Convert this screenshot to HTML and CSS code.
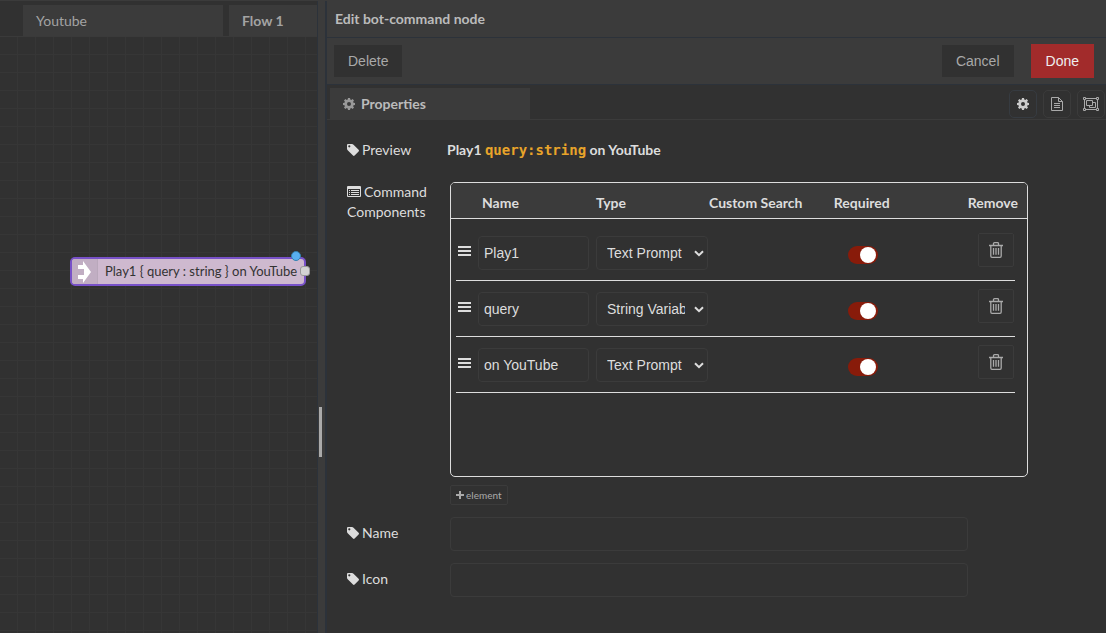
FILE: index.html
```html
<!DOCTYPE html>
<html lang="en">
<head>
<meta charset="utf-8">
<title>Edit bot-command node</title>
<link rel="stylesheet" href="styles.css">
</head>
<body>
<svg class="defs" aria-hidden="true">
  <symbol id="tag" viewBox="0 0 12 12"><path fill-rule="evenodd" d="M0 1Q0 0 1 0H5Q5.800 0 6.500 .7L11.600 5.800Q12.400 6.600 11.600 7.400L7.600 11.500Q6.800 12.300 6 11.500L.7 6.200Q0 5.500 0 4.800ZM2.300 1.200A1.100 1.100 0 1 0 2.300 3.400A1.100 1.100 0 1 0 2.300 1.200Z"/></symbol>
  <symbol id="gear" viewBox="0 0 12 12"><path fill-rule="evenodd" d="M5 0H7L7.300 1.500 8.300 1.900 9.600 1 11 2.400 10.100 3.700 10.500 4.700 12 5V7L10.500 7.300 10.100 8.300 11 9.600 9.600 11 8.300 10.100 7.300 10.500 7 12H5L4.700 10.500 3.700 10.100 2.400 11 1 9.600 1.900 8.300 1.500 7.300 0 7V5L1.500 4.700 1.900 3.700 1 2.400 2.400 1 3.700 1.900 4.700 1.500ZM6 4A2 2 0 1 0 6 8A2 2 0 1 0 6 4Z"/></symbol>
  <symbol id="bars" viewBox="0 0 13 11"><path d="M0 0H13V2H0ZM0 4H13V6H0ZM0 8H13V10H0Z"/></symbol>
  <symbol id="chevron" viewBox="0 0 10 7"><path d="M1 1.200L5 5.200L9 1.200" fill="none" stroke="currentColor" stroke-width="2"/></symbol>
  <symbol id="trash" viewBox="0 0 14 16"><path d="M0 3.500H14M4.500 3V1.500Q4.500 .7 5.500 .7H8.500Q9.500 .7 9.500 1.500V3M1.800 4V14Q1.800 15.300 3 15.300H11Q12.200 15.300 12.200 14V4M4.500 6V12.800M7 6V12.800M9.500 6V12.800" fill="none" stroke="currentColor" stroke-width="1.300"/></symbol>
</svg>
<div class="editor">
  <main class="workspace">
    <nav class="flow-tabs">
      <a class="flow-tab" href="#youtube">Youtube</a>
      <a class="flow-tab flow-tab-active" href="#flow1">Flow 1</a>
    </nav>
    <div class="canvas">
      <div class="node">
        <span class="node-icon"><svg width="13" height="22" viewBox="0 0 13 22"><path d="M0 4H5V0L13 11L5 22V18H0V14H6V8H0Z"/></svg></span>
        <span class="node-label">Play1 { query : string } on YouTube</span>
        <span class="node-changed"></span>
        <span class="node-port"></span>
      </div>
    </div>
  </main>
  <div class="separator"><span class="grip"></span></div>
  <aside class="tray">
    <header class="tray-header">Edit bot-command node</header>
    <div class="toolbar">
      <button class="btn" type="button">Delete</button>
      <span class="toolbar-end">
        <button class="btn" type="button">Cancel</button>
        <button class="btn btn-primary" type="button">Done</button>
      </span>
    </div>
    <div class="tray-tabs">
      <a class="tray-tab" href="#properties"><svg width="12" height="12"><use href="#gear"/></svg>Properties</a>
      <span class="tab-buttons">
        <button class="icon-btn icon-btn-active" type="button" aria-label="Properties"><svg width="12" height="12"><use href="#gear"/></svg></button>
        <button class="icon-btn" type="button" aria-label="Description"><svg width="12" height="14" viewBox="0 0 12 14"><path class="line" d="M.5 .5H7.500L11.500 4.500V13.500H.5ZM7.500 .5V4.500H11.500M3 6.500H9M3 8.500H9M3 10.500H9"/></svg></button>
        <button class="icon-btn" type="button" aria-label="Appearance"><svg width="16" height="14" viewBox="0 0 16 14"><path class="line" d="M2.500 1.500H13.500M2.500 12.500H13.500M1.500 2.500V11.500M14.500 2.500V11.500M.5 .5H2.500V2.500H.5ZM13.500 .5H15.500V2.500H13.500ZM.5 11.500H2.500V13.500H.5ZM13.500 11.500H15.500V13.500H13.500ZM3.500 3.500H9.500V8.500H3.500ZM9.500 5.500H12.500V10.500H6.500V8.500"/></svg></button>
      </span>
    </div>
    <form class="form">
      <div class="row row-preview">
        <span class="label"><svg width="12" height="12"><use href="#tag"/></svg>Preview</span>
        <p class="preview">Play1 <code>query:string</code> on YouTube</p>
      </div>
      <div class="row">
        <span class="label"><svg width="14" height="12" viewBox="0 0 14 12"><path fill-rule="evenodd" d="M1 0H13Q14 0 14 1V10Q14 11 13 11H1Q0 11 0 10V1Q0 0 1 0ZM1 3V10H13V3ZM2 4H3V5H2ZM4 4H12V5H4ZM2 6H3V7H2ZM4 6H12V7H4ZM2 8H3V9H2ZM4 8H12V9H4Z"/></svg>Command Components</span>
        <div class="field">
          <div class="box">
            <table class="components">
              <thead>
                <tr><td></td><th class="name-head">Name</th><th>Type</th><th>Custom Search</th><th>Required</th><th>Remove</th></tr>
              </thead>
              <tbody>
                <tr>
                  <td class="handle"><svg width="13" height="11"><use href="#bars"/></svg></td>
                  <td><input class="text" type="text" value="Play1" aria-label="Name"></td>
                  <td class="pick"><select class="select" aria-label="Type"><option>Text Prompt</option><option>String Variable</option></select><svg class="chevron" width="10" height="7"><use href="#chevron"/></svg></td>
                  <td></td>
                  <td class="required"><input class="toggle" type="checkbox" checked aria-label="Required"></td>
                  <td class="remove"><button class="trash" type="button" aria-label="Remove"><svg width="14" height="16"><use href="#trash"/></svg></button></td>
                </tr>
                <tr>
                  <td class="handle"><svg width="13" height="11"><use href="#bars"/></svg></td>
                  <td><input class="text" type="text" value="query" aria-label="Name"></td>
                  <td class="pick"><select class="select" aria-label="Type"><option>Text Prompt</option><option selected>String Variable</option></select><svg class="chevron" width="10" height="7"><use href="#chevron"/></svg></td>
                  <td></td>
                  <td class="required"><input class="toggle" type="checkbox" checked aria-label="Required"></td>
                  <td class="remove"><button class="trash" type="button" aria-label="Remove"><svg width="14" height="16"><use href="#trash"/></svg></button></td>
                </tr>
                <tr>
                  <td class="handle"><svg width="13" height="11"><use href="#bars"/></svg></td>
                  <td><input class="text" type="text" value="on YouTube" aria-label="Name"></td>
                  <td class="pick"><select class="select" aria-label="Type"><option>Text Prompt</option><option>String Variable</option></select><svg class="chevron" width="10" height="7"><use href="#chevron"/></svg></td>
                  <td></td>
                  <td class="required"><input class="toggle" type="checkbox" checked aria-label="Required"></td>
                  <td class="remove"><button class="trash" type="button" aria-label="Remove"><svg width="14" height="16"><use href="#trash"/></svg></button></td>
                </tr>
              </tbody>
            </table>
          </div>
          <button class="add" type="button"><svg width="8" height="8" viewBox="0 0 8 8"><path d="M3 0H5V3H8V5H5V8H3V5H0V3H3Z"/></svg>element</button>
        </div>
      </div>
      <div class="row">
        <label class="label label-input" for="name"><svg width="12" height="12"><use href="#tag"/></svg>Name</label>
        <div class="field"><input class="text text-wide" id="name" type="text"></div>
      </div>
      <div class="row">
        <label class="label label-input" for="icon"><svg width="12" height="12"><use href="#tag"/></svg>Icon</label>
        <div class="field"><input class="text text-wide" id="icon" type="text"></div>
      </div>
    </form>
  </aside>
</div>
</body>
</html>
```
FILE: styles.css
```css
* { box-sizing: border-box; }
body {
  margin: 0;
  background: #313131;
  color: #ddd;
  font: 14px/20px Lato, sans-serif;
}
svg { fill: currentColor; flex: none; }
a { color: inherit; text-decoration: none; }
button, input, select {
  margin: 0;
  font: 14px/20px "Liberation Sans", Arial, sans-serif;
  color: inherit;
}
.line { fill: none; stroke: currentColor; }
.defs { display: none; }

.editor { display: flex; min-height: 100vh; border-top: 1px solid #3b3b3b; }

.workspace { flex: 1; min-width: 0; display: flex; flex-direction: column; border-right: 1px solid #2c323a; }
.flow-tabs {
  display: flex;
  gap: 6px;
  height: 36px;
  padding: 4px 0 0 23px;
  border-bottom: 1px solid #3a3a3a;
  overflow: hidden;
}
.flow-tab {
  flex: none;
  width: 200px;
  padding: 6px 13px;
  background: #3b3b3b;
  color: #a3a3a3;
}
.flow-tab-active { font-weight: 700; }
.canvas {
  position: relative;
  flex: 1;
  background:
    linear-gradient(#363636 1px, transparent 1px) 0 17px / 18px 18px,
    linear-gradient(90deg, #363636 1px, transparent 1px) 17px 0 / 18px 18px;
}
.node {
  position: absolute;
  left: 70px;
  top: 220px;
  display: flex;
  width: 236px;
  height: 29px;
  border: 2px solid #7851c8;
  border-radius: 5px;
  background: #ceb9cf;
  color: #333;
  font-size: 13px;
  line-height: 24px;
  white-space: nowrap;
}
.node-icon {
  display: flex;
  align-items: center;
  width: 26px;
  padding-left: 6px;
  border-right: 1px solid #b9a8bb;
  border-radius: 3px 0 0 3px;
  background: #c1aec3;
  color: #fff;
}
.node-label { padding-left: 7px; }
.node-changed {
  position: absolute;
  right: 3px;
  top: -8px;
  width: 10px;
  height: 10px;
  border: 1px solid #3480b0;
  border-radius: 50%;
  background: #58aff0;
}
.node-port {
  position: absolute;
  right: -6px;
  top: 7px;
  width: 10px;
  height: 10px;
  border: 1px solid #999;
  border-radius: 3px;
  background: #d3d3d3;
}

.separator { display: flex; align-items: center; width: 7px; background: #3b3b3b; }
.grip { width: 3px; height: 50px; margin: 230px 0 0 1px; background: #aaa; }

.tray { flex: none; width: 71%; max-width: calc(100% - 325px); border-left: 2px solid #2c323a; }
.tray-header {
  padding: 8px;
  background: #3b3b3b;
  border-bottom: 1px solid #2c323a;
  color: #bbb;
  font-weight: 700;
}
.toolbar {
  display: flex;
  align-items: center;
  justify-content: space-between;
  height: 47px;
  padding: 0 12px 0 7px;
  background: #3b3b3b;
  border-bottom: 1px solid #2c323a;
}
.toolbar-end { display: flex; align-items: center; gap: 17px; }
.btn { padding: 6px 14px; border: 0; background: #313131; color: #a9a9a9; }
.btn-primary { padding: 7px 15px; background: #a22b2b; color: #eee; }
.tray-tabs {
  display: flex;
  justify-content: space-between;
  height: 35px;
  padding: 3px 1px 0 3px;
  border-bottom: 1px solid #3b3b3b;
}
.tray-tab {
  display: flex;
  align-items: center;
  gap: 6px;
  width: 200px;
  padding: 0 13px;
  background: #3b3b3b;
  color: #bbb;
  font-weight: 700;
}
.tray-tab svg { color: #999; }
.tab-buttons { display: flex; align-items: center; gap: 6px; }
.icon-btn {
  display: grid;
  place-items: center;
  width: 28px;
  height: 28px;
  padding: 0;
  border: 1px solid #3b3b3b;
  border-radius: 5px;
  background: none;
  color: #aaa;
}
.icon-btn-active { border-color: #363b41; color: #ccc; }

.form { display: flex; flex-direction: column; gap: 12px; padding: 20px 14px 20px 20px; }
.row { display: flex; }
.row-preview { margin-bottom: 10px; }
.label { flex: none; width: 100px; padding-right: 10px; }
.label-input { padding-top: 6px; }
.label svg { margin-right: 3px; vertical-align: -1px; }
.preview { margin: 0; font-weight: 700; }
.preview code { color: #e8a42a; font: 700 14px/20px "DejaVu Sans Mono", monospace; }
.field { flex: 1; min-width: 0; padding-left: 3px; }

.box { width: 90%; min-height: 295px; border: 1px solid #ddd; border-radius: 5px; overflow: hidden; }
.components, .components thead, .components tbody { display: block; }
.components thead { padding: 0 4px 0 5px; background: #3b3b3b; border-bottom: 1px solid #ddd; }
.components tbody { padding: 6px 12px 0 5px; }
.components tr { display: grid; grid-template-columns: 22px 118px 113px 1fr 144px 37px; }
.components thead tr { grid-template-columns: 22px 118px 113px 1fr 134px 55px; }
.components tbody tr { height: 56px; border-bottom: 1px solid #ddd; }
.components th { padding: 10px 0 5px; text-align: left; font-weight: 700; }
.components .name-head { padding-left: 4px; }
.components td { padding: 11px 0 0; }
.components .handle { padding: 21px 0 0 2px; line-height: 0; }
.components .required { padding: 21px 0 0 14px; line-height: 0; }
.components .remove { padding: 8px 0 0; }
.text {
  display: block;
  width: 111px;
  height: 34px;
  padding: 0 5px;
  border: 1px solid #3b3b3b;
  border-radius: 4px;
  background: none;
}
.text-wide { width: calc(90% - 60px); }
.pick { position: relative; }
.select {
  appearance: none;
  width: 112px;
  height: 34px;
  padding: 0 22px 0 10px;
  border: 1px solid #3b3b3b;
  border-radius: 4px;
  background: #313131;
}
.chevron { position: absolute; right: 5px; top: 25px; pointer-events: none; }
.toggle {
  appearance: none;
  display: flex;
  justify-content: flex-end;
  width: 30px;
  height: 18px;
  padding: 1px 2px;
  border-radius: 9px;
  background: #881b0a;
}
.toggle::before { content: ""; width: 16px; height: 16px; border-radius: 50%; background: #fff; }
.trash {
  display: grid;
  place-items: center;
  width: 36px;
  height: 34px;
  padding: 0;
  border: 1px solid #3b3b3b;
  border-radius: 2px;
  background: none;
  color: #aaa;
}
.add {
  display: flex;
  align-items: center;
  gap: 2px;
  height: 20px;
  margin-top: 8px;
  padding: 0 5px;
  border: 1px solid #3b3b3b;
  border-radius: 2px;
  background: none;
  color: #aaa;
  font: 10px/18px Lato, sans-serif;
}
```
